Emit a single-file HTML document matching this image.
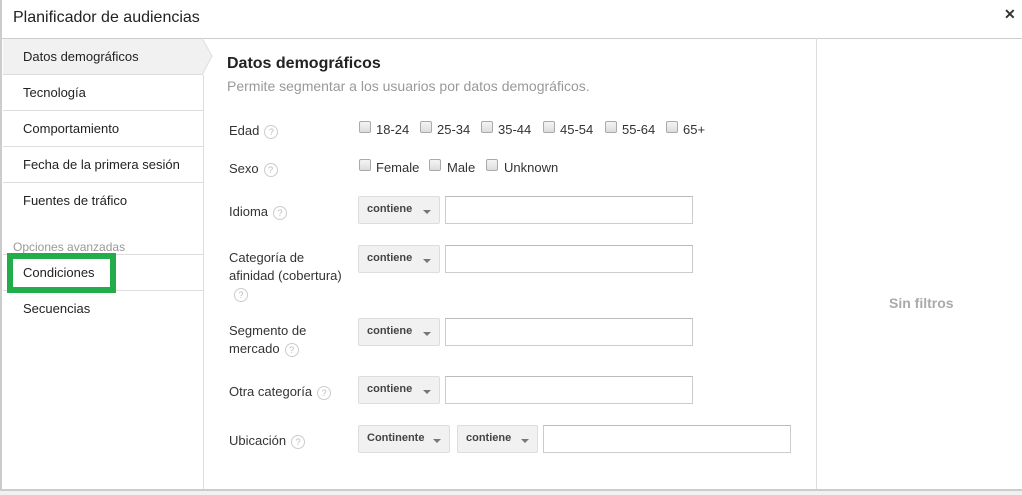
<!DOCTYPE html>
<html><head><meta charset="utf-8">
<style>
*{margin:0;padding:0;box-sizing:border-box}
body{width:1022px;height:495px;overflow:hidden;background:#fff;font-family:"Liberation Sans",Arial,sans-serif;font-size:13px;color:#222;position:relative}
.a{position:absolute;white-space:nowrap}
.nav{left:23px;font-size:13px;color:#222}
.hl{position:absolute;left:3px;width:200px;height:1px;background:#ddd}
.lbl{left:229px;color:#333;font-size:13px;line-height:18px}
.q{display:inline-block;width:14px;height:14px;border:1px solid #ccc;border-radius:50%;font-size:9px;color:#bbb;text-align:center;line-height:12px;vertical-align:middle;margin-left:5px}
.cb{position:absolute;width:12px;height:12px;border:1px solid #aaa;border-radius:2px;background:linear-gradient(#f4f4f4,#ddd)}
.ct{position:absolute;font-size:13px;color:#333}
.dd{position:absolute;height:28px;background:#f1f1f1;border:1px solid #ddd;border-radius:2px;font-size:11px;font-weight:bold;color:#444;padding-left:8px;line-height:25px}
.dd:after{content:"";position:absolute;right:8px;top:13px;border-left:4px solid transparent;border-right:4px solid transparent;border-top:4px solid #777}
.in{position:absolute;height:28px;border:1px solid #ccc;border-top-color:#bbb;background:#fff}
</style></head><body>
<div class="a" style="left:0;top:0;width:2px;height:489px;background:#ccc"></div>
<div class="a" style="left:13px;top:9px;font-size:16px;color:#222">Planificador de audiencias</div>
<div class="a" style="left:1004px;top:6px;font-size:14px;font-weight:bold;color:#333">✕</div>
<div class="a" style="left:2px;top:38px;width:1020px;height:1px;background:#ccc"></div>
<div class="a" style="left:3px;top:39px;width:200px;height:35px;background:#f1f1f1"></div>
<svg class="a" style="left:202px;top:38px" width="12" height="37"><path d="M0 0 L10 18 L0 37" fill="#f1f1f1" stroke="#ddd"/></svg>
<div class="a" style="left:203px;top:75px;width:1px;height:414px;background:#ddd"></div>
<div class="a nav" style="top:49px">Datos demográficos</div>
<div class="hl" style="top:74px"></div>
<div class="a nav" style="top:85px">Tecnología</div>
<div class="hl" style="top:110px"></div>
<div class="a nav" style="top:121px">Comportamiento</div>
<div class="hl" style="top:146px"></div>
<div class="a nav" style="top:157px">Fecha de la primera sesión</div>
<div class="hl" style="top:182px"></div>
<div class="a nav" style="top:193px">Fuentes de tráfico</div>
<div class="a" style="left:13px;top:240px;color:#999;font-size:12px">Opciones avanzadas</div>
<div class="hl" style="top:254px"></div>
<div class="a nav" style="top:265px">Condiciones</div>
<div class="hl" style="top:290px"></div>
<div class="a nav" style="top:301px">Secuencias</div>
<div class="a" style="left:7px;top:253px;width:109px;height:40px;border:6px solid #22ac4a"></div>
<div class="a" style="left:816px;top:38px;width:1px;height:451px;background:#ddd"></div>
<div class="a" style="left:889px;top:295px;font-size:14px;font-weight:bold;color:#aaa">Sin filtros</div>
<div class="a" style="left:227px;top:55px;font-size:16px;font-weight:bold;color:#222">Datos demográficos</div>
<div class="a" style="left:227px;top:78px;font-size:14px;color:#999">Permite segmentar a los usuarios por datos demográficos.</div>
<div class="a lbl" style="top:122px">Edad<span class="q">?</span></div>
<div class="a lbl" style="top:160px">Sexo<span class="q">?</span></div>
<div class="a lbl" style="top:203px">Idioma<span class="q">?</span></div>
<div class="a lbl" style="top:249px">Categoría de<br>afinidad (cobertura)<br><span class="q" style="margin-left:5px">?</span></div>
<div class="a lbl" style="top:322px">Segmento de<br>mercado<span class="q">?</span></div>
<div class="a lbl" style="top:383px">Otra categoría<span class="q">?</span></div>
<div class="a lbl" style="top:432px">Ubicación<span class="q">?</span></div>

<div class="cb" style="left:359px;top:121px"></div><div class="ct" style="left:376px;top:122px">18-24</div>
<div class="cb" style="left:420px;top:121px"></div><div class="ct" style="left:437px;top:122px">25-34</div>
<div class="cb" style="left:481px;top:121px"></div><div class="ct" style="left:498px;top:122px">35-44</div>
<div class="cb" style="left:543px;top:121px"></div><div class="ct" style="left:560px;top:122px">45-54</div>
<div class="cb" style="left:605px;top:121px"></div><div class="ct" style="left:622px;top:122px">55-64</div>
<div class="cb" style="left:666px;top:121px"></div><div class="ct" style="left:683px;top:122px">65+</div>
<div class="cb" style="left:359px;top:159px"></div><div class="ct" style="left:376px;top:160px">Female</div>
<div class="cb" style="left:429px;top:159px"></div><div class="ct" style="left:447px;top:160px">Male</div>
<div class="cb" style="left:486px;top:159px"></div><div class="ct" style="left:504px;top:160px">Unknown</div>

<div class="dd" style="left:358px;top:196px;width:82px">contiene</div><div class="in" style="left:445px;top:196px;width:248px"></div>
<div class="dd" style="left:358px;top:245px;width:82px">contiene</div><div class="in" style="left:445px;top:245px;width:248px"></div>
<div class="dd" style="left:358px;top:318px;width:82px">contiene</div><div class="in" style="left:445px;top:318px;width:248px"></div>
<div class="dd" style="left:358px;top:376px;width:82px">contiene</div><div class="in" style="left:445px;top:376px;width:248px"></div>
<div class="dd" style="left:358px;top:425px;width:92px">Continente</div>
<div class="dd" style="left:457px;top:425px;width:81px">contiene</div>
<div class="in" style="left:543px;top:425px;width:248px"></div>
<div class="a" style="left:0;top:489px;width:1022px;height:2px;background:#ccc"></div>
<div class="a" style="left:0;top:491px;width:1022px;height:4px;background:#f1f1f1"></div>
</body></html>
